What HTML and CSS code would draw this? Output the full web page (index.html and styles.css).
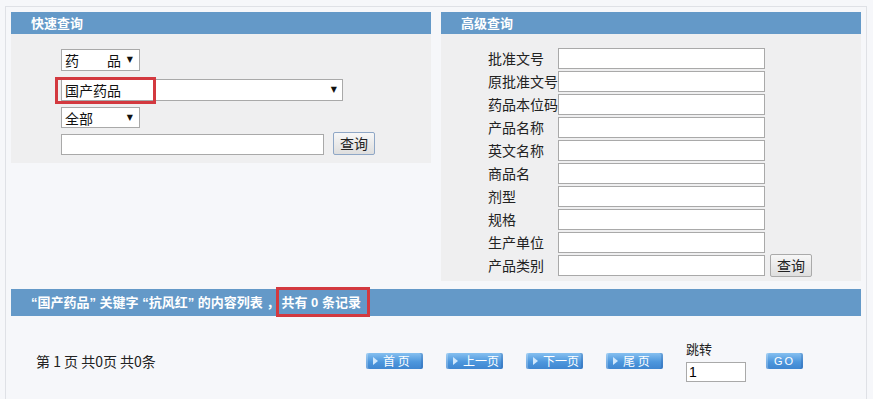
FILE: index.html
```html
<!DOCTYPE html>
<html lang="zh-CN">
<head>
    <meta charset="UTF-8">
    <title>药品查询</title>
    <link rel="stylesheet" href="styles.css">
</head>
<body>
    <div class="frame">
        <div class="top">
            <!-- 快速查询 -->
            <div class="panel">
                <div class="panel-head">快速查询</div>
                <div class="quick-body">
                    <span class="sel sel-short">
                        <select><option>药　　品</option></select>
                    </span>
                    <span class="sel sel-long">
                        <select><option>国产药品</option></select>
                        <span class="mark"></span>
                    </span>
                    <span class="sel sel-short sel-all">
                        <select><option>全部</option></select>
                    </span>
                    <div class="quick-row">
                        <input type="text" class="quick-input">
                        <button class="btn">查询</button>
                    </div>
                </div>
            </div>

            <!-- 高级查询 -->
            <div class="panel">
                <div class="panel-head">高级查询</div>
                <div class="adv-body">
                    <div class="adv-row"><label>批准文号</label><input type="text"></div>
                    <div class="adv-row"><label>原批准文号</label><input type="text"></div>
                    <div class="adv-row"><label>药品本位码</label><input type="text"></div>
                    <div class="adv-row"><label>产品名称</label><input type="text"></div>
                    <div class="adv-row"><label>英文名称</label><input type="text"></div>
                    <div class="adv-row"><label>商品名</label><input type="text"></div>
                    <div class="adv-row"><label>剂型</label><input type="text"></div>
                    <div class="adv-row"><label>规格</label><input type="text"></div>
                    <div class="adv-row"><label>生产单位</label><input type="text"></div>
                    <div class="adv-row"><label>产品类别</label><input type="text"><button class="btn">查询</button></div>
                </div>
            </div>
        </div>

        <!-- 结果列表 -->
        <div class="list-head">
            “国产药品” 关键字 “抗风红” 的内容列表 ，<span class="count">共有 0 条记录<span class="mark"></span></span>
        </div>

        <div class="pager">
            <div class="pager-info">第 1 页 共0页 共0条</div>
            <span class="pbtn">首 页</span>
            <span class="pbtn">上一页</span>
            <span class="pbtn">下一页</span>
            <span class="pbtn">尾 页</span>
            <div class="jump">
                <div class="jump-label">跳转</div>
                <input type="text" value="1">
            </div>
            <span class="pbtn go">GO</span>
        </div>
    </div>
</body>
</html>
```

FILE: styles.css
```css
* {
    margin: 0;
    padding: 0;
    box-sizing: border-box;
}

body {
    font-family: "Noto Sans CJK SC", "Liberation Sans", sans-serif;
    font-size: 14px;
    color: #222;
    background-color: #f6f7fa;
    overflow: hidden;
}

.frame {
    margin: 6px 0 0 5px;
    width: 862px;
    height: 393px;
    border: 1px solid #dfe1e6;
    border-bottom: none;
    padding: 5px 5px 0 5px;
}

.top {
    display: flex;
    align-items: flex-start;
    gap: 10px;
}

.panel {
    width: 420px;
}

.panel-head,
.list-head {
    background-color: #6499c8;
    color: #fff;
    font-weight: bold;
    font-size: 13px;
    padding-left: 20px;
}

.panel-head {
    height: 22px;
    line-height: 22px;
}

/* Quick search */
.quick-body {
    background-color: #efeff0;
    height: 129px;
    padding: 15px 0 0 50px;
    display: flex;
    flex-direction: column;
    align-items: flex-start;
}

.sel {
    position: relative;
    display: block;
}

.sel::after {
    content: "▼";
    position: absolute;
    right: 7px;
    top: 6px;
    font-family: "DejaVu Sans", sans-serif;
    font-size: 8px;
    line-height: 10px;
    color: #111;
    pointer-events: none;
}

.sel select {
    appearance: none;
    -webkit-appearance: none;
    display: block;
    height: 22px;
    border: 1px solid #a9a9a9;
    background-color: #fff;
    font-family: inherit;
    font-size: 14px;
    line-height: 20px;
    color: #111;
    padding-left: 3px;
}

.sel-short select {
    width: 79px;
}

.sel-long {
    margin-top: 8px;
}

.sel-long::after {
    right: 6px;
}

.sel-long select {
    width: 282px;
}

.sel-all {
    margin-top: 6px;
}

.sel-all select {
    height: 21px;
}

.mark {
    position: absolute;
    border: 3px solid #d3393f;
    pointer-events: none;
}

.sel-long .mark {
    left: -6px;
    top: -2px;
    width: 101px;
    height: 27px;
}

.quick-row {
    display: flex;
    align-items: flex-end;
    margin-top: 4px;
}

.quick-input {
    width: 263px;
    height: 21px;
    border: 1px solid #a9a9a9;
    background-color: #fff;
}

.btn {
    width: 42px;
    height: 23px;
    margin-left: 9px;
    border: 1px solid #8fa7c6;
    border-radius: 2px;
    background: linear-gradient(#f7f7f7, #dedede);
    font-family: inherit;
    font-size: 14px;
    color: #222;
    line-height: 19px;
}

/* Advanced search */
.adv-body {
    background-color: #efeff0;
    padding: 14px 0 5px 47px;
}

.adv-row {
    display: flex;
    align-items: center;
    height: 21px;
    margin-bottom: 2px;
}

.adv-row:last-child {
    margin-bottom: 0;
}

.adv-row label {
    width: 70px;
    line-height: 21px;
    white-space: nowrap;
    color: #222;
}

.adv-row input {
    width: 207px;
    height: 21px;
    border: 1px solid #a9a9a9;
    background-color: #fff;
}

.adv-row .btn {
    margin-left: 5px;
    border-color: #aaa;
}

/* Result list */
.list-head {
    margin-top: 8px;
    height: 27px;
    line-height: 27px;
    white-space: nowrap;
    font-family: "Liberation Sans", "Noto Sans CJK SC", sans-serif;
}

.count {
    position: relative;
    display: inline-block;
    height: 27px;
    vertical-align: top;
    margin-left: 2px;
}

.count .mark {
    left: -5px;
    top: -2px;
    width: 94px;
    height: 30px;
}

.pager {
    display: flex;
    align-items: center;
    gap: 23px;
    height: 45px;
    margin-top: 22px;
    padding-left: 25px;
}

.pager-info {
    width: 307px;
    font-size: 14px;
    color: #222;
}

.pbtn {
    position: relative;
    display: block;
    width: 57px;
    height: 16px;
    border-radius: 2px;
    background: linear-gradient(#86c0f0, #4d97dd 55%, #3f86d0);
    box-shadow: inset -2px 0 0 rgba(30, 80, 150, 0.25), inset 2px 0 0 rgba(255, 255, 255, 0.25);
    color: #fff;
    font-size: 12px;
    line-height: 16px;
    padding-left: 17px;
    white-space: nowrap;
}

.pbtn::before {
    content: "";
    position: absolute;
    left: 7px;
    top: 4px;
    border-left: 5px solid #cfe7fb;
    border-top: 4px solid transparent;
    border-bottom: 4px solid transparent;
}

.jump {
    display: flex;
    flex-direction: column;
}

.jump-label {
    font-size: 13px;
    line-height: 18px;
    color: #222;
}

.jump input {
    margin-top: 4px;
    width: 60px;
    height: 20px;
    border: 1px solid #a9a9a9;
    background-color: #fff;
    font-family: "Liberation Sans", sans-serif;
    font-size: 14px;
    padding-left: 2px;
}

.go {
    width: 37px;
    margin-left: -3px;
    padding-left: 0;
    text-align: center;
    font-family: "Liberation Sans", sans-serif;
    font-size: 11px;
    letter-spacing: 2px;
}

.go::before {
    display: none;
}
```
